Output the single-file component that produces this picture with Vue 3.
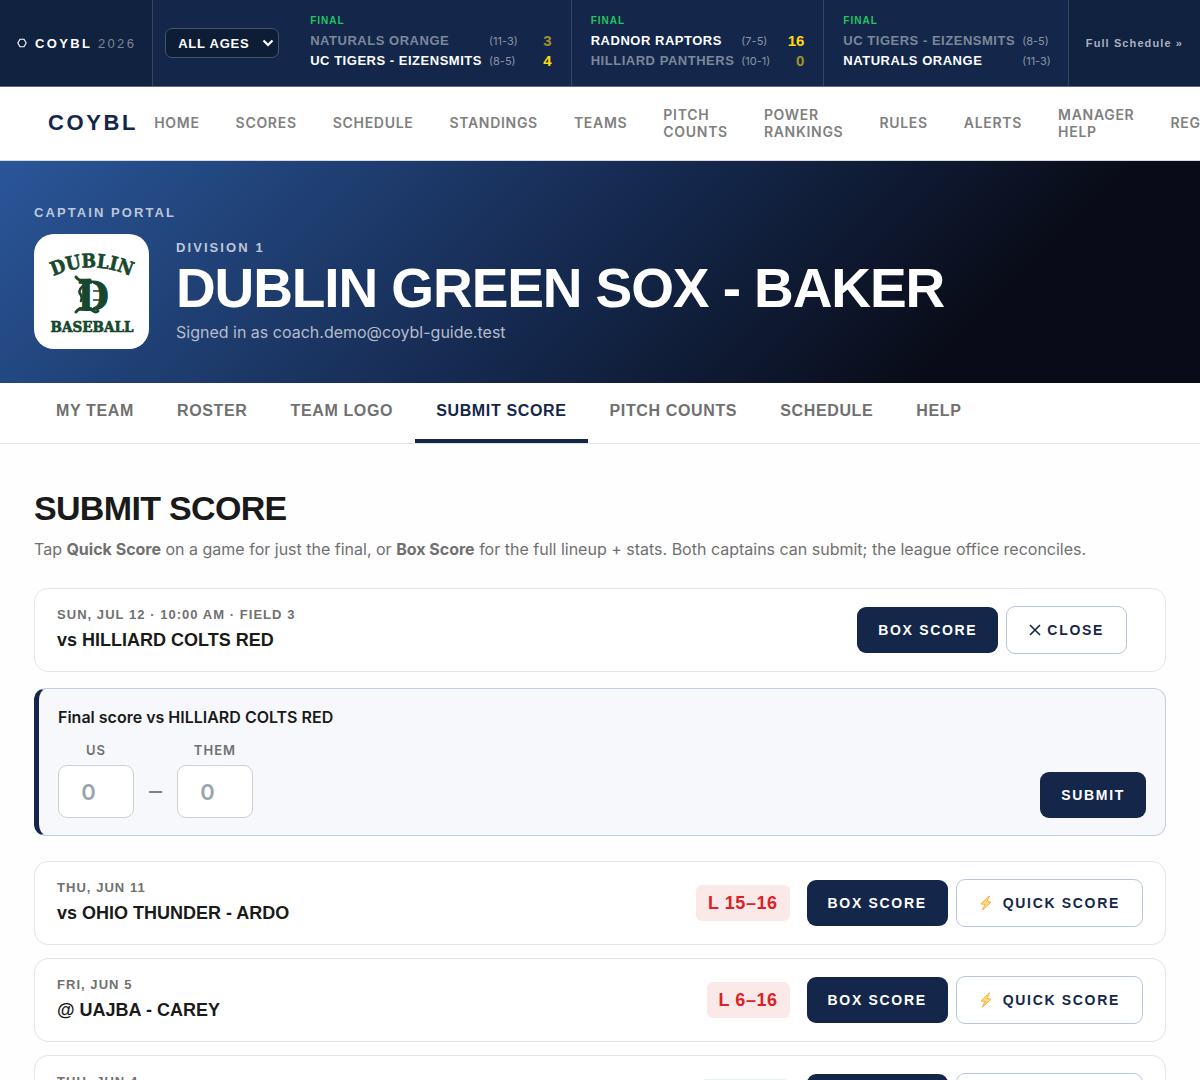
<template>
    <div class="page">
        <section class="ticker" aria-label="Scores">
            <div class="ticker-brand">
                <svg class="hex" viewBox="0 0 10 10" aria-hidden="true">
                    <path d="M3 1.2h4L9.2 5 7 8.8H3L.8 5z" fill="none" stroke="currentColor" stroke-width="1.1" />
                </svg>
                <span>COYBL <span class="year">2026</span></span>
            </div>
            <div class="ticker-filter">
                <select v-model="age" aria-label="Age group">
                    <option>ALL AGES</option>
                    <option>9U</option>
                    <option>10U</option>
                    <option>11U</option>
                    <option>12U</option>
                </select>
                <svg class="chevron" viewBox="0 0 12 8" aria-hidden="true">
                    <path d="M1.5 1.5 6 6l4.5-4.5" fill="none" stroke="currentColor" stroke-width="2.2" />
                </svg>
            </div>
            <div class="ticker-games">
                <div class="ticker-game" v-for="(game, index) in finals" :key="index">
                    <div class="status">FINAL</div>
                    <div class="lines">
                        <template v-for="side in game" :key="side.name">
                            <span class="name" :class="{ lost: !side.won }">{{ side.name }}</span>
                            <span class="record">({{ side.record }})</span>
                            <span class="runs" :class="{ lost: !side.won }">{{ side.runs }}</span>
                        </template>
                    </div>
                </div>
            </div>
            <a class="ticker-more" href="#">Full Schedule »</a>
        </section>

        <header class="site-nav">
            <a class="site-logo" href="#">COYBL</a>
            <nav>
                <a href="#" v-for="link in links" :key="link">{{ link }}</a>
            </nav>
        </header>

        <section class="hero">
            <div class="eyebrow">CAPTAIN PORTAL</div>
            <div class="team">
                <div class="team-logo">
                    <svg viewBox="0 0 84 84" role="img" aria-label="Dublin Baseball">
                        <defs>
                            <path id="arch" d="M-2 29Q42 6 86 29" />
                        </defs>
                        <g class="slab" fill="#17472d" stroke="#17472d" text-anchor="middle">
                            <text font-size="19" stroke-width=".6">
                                <textPath href="#arch" startOffset="50%">DUBLIN</textPath>
                            </text>
                            <text x="42" y="82" font-size="15" stroke-width=".6">BASEBALL</text>
                            <text x="43" y="60" font-size="40" stroke-width="1">D</text>
                        </g>
                        <!-- flourishes and split stem of the monogram -->
                        <g fill="none" stroke="#17472d" stroke-linecap="round">
                            <path d="M26 27c3 5 8 3 14 3" stroke-width="3" />
                            <path d="M33 36c-5 4-4 7-2 9 1 2 1 4 0 6" stroke-width="2.6" />
                            <path d="M26 62c4-6 9-1 14-3 3 1 5 5 8 2" stroke-width="3" />
                        </g>
                        <path d="M42.5 33v25" stroke="#fff" stroke-width="1.4" />
                        <path d="M43 41h8M43 50h8" stroke="#17472d" stroke-width="1.4" />
                    </svg>
                </div>
                <div>
                    <div class="eyebrow">DIVISION 1</div>
                    <h1>DUBLIN GREEN SOX - BAKER</h1>
                    <p>Signed in as coach.demo@coybl-guide.test</p>
                </div>
            </div>
        </section>

        <nav class="tabs">
            <a href="#" v-for="tab in tabs" :key="tab" :class="{ active: tab === activeTab }" @click.prevent="activeTab = tab">{{ tab }}</a>
        </nav>

        <main>
            <h2>SUBMIT SCORE</h2>
            <p class="intro">
                Tap <strong>Quick Score</strong> on a game for just the final, or <strong>Box Score</strong> for the full lineup + stats. Both captains can submit; the league office reconciles.
            </p>

            <template v-for="game in games" :key="game.id">
                <article class="game" :class="{ open: openId === game.id }">
                    <div class="game-info">
                        <div class="when">{{ game.when }}</div>
                        <div class="opponent">{{ game.opponent }}</div>
                    </div>
                    <span v-if="game.result" class="result" :class="{ win: game.result.startsWith('W') }">{{ game.result }}</span>
                    <div class="actions">
                        <button type="button" class="btn">BOX SCORE</button>
                        <button v-if="openId === game.id" type="button" class="btn outline" @click="openId = null">
                            <svg class="cross" viewBox="0 0 12 12" aria-hidden="true">
                                <path d="M1 1l10 10M11 1L1 11" stroke="currentColor" stroke-width="1.6" />
                            </svg>
                            CLOSE
                        </button>
                        <button v-else type="button" class="btn outline quick" @click="openId = game.id">
                            <svg class="bolt" viewBox="0 0 14 16" aria-hidden="true">
                                <path d="M10.5 1 2 8.8l4.2.6L3.4 15 12 7.2l-4.3-.6z" fill="#ffe08a" stroke="#f9ab2e" />
                            </svg>
                            QUICK SCORE
                        </button>
                    </div>
                </article>

                <form v-if="openId === game.id" class="score-form" @submit.prevent>
                    <h3>Final score {{ game.opponent }}</h3>
                    <div class="score-row">
                        <label>US<input type="number" min="0" placeholder="0" v-model="us" /></label>
                        <span class="dash">–</span>
                        <label>THEM<input type="number" min="0" placeholder="0" v-model="them" /></label>
                        <button type="submit" class="btn">SUBMIT</button>
                    </div>
                </form>
            </template>
        </main>
    </div>
</template>

<script setup>
import { ref } from 'vue'

const age = ref('ALL AGES')
const activeTab = ref('SUBMIT SCORE')
const openId = ref(1)
const us = ref('')
const them = ref('')

const finals = [
    [
        { name: 'NATURALS ORANGE', record: '11-3', runs: 3, won: false },
        { name: 'UC TIGERS - EIZENSMITS', record: '8-5', runs: 4, won: true }
    ],
    [
        { name: 'RADNOR RAPTORS', record: '7-5', runs: 16, won: true },
        { name: 'HILLIARD PANTHERS', record: '10-1', runs: 0, won: false }
    ],
    [
        { name: 'UC TIGERS - EIZENSMITS', record: '8-5', runs: 2, won: false },
        { name: 'NATURALS ORANGE', record: '11-3', runs: 7, won: true }
    ]
]

const links = ['HOME', 'SCORES', 'SCHEDULE', 'STANDINGS', 'TEAMS', 'PITCH COUNTS', 'POWER RANKINGS', 'RULES', 'ALERTS', 'MANAGER HELP', 'REGISTER']
const tabs = ['MY TEAM', 'ROSTER', 'TEAM LOGO', 'SUBMIT SCORE', 'PITCH COUNTS', 'SCHEDULE', 'HELP']

const games = [
    { id: 1, when: 'SUN, JUL 12 · 10:00 AM · FIELD 3', opponent: 'vs HILLIARD COLTS RED' },
    { id: 2, when: 'THU, JUN 11', opponent: 'vs OHIO THUNDER - ARDO', result: 'L 15–16' },
    { id: 3, when: 'FRI, JUN 5', opponent: '@ UAJBA - CAREY', result: 'L 6–16' },
    { id: 4, when: 'THU, JUN 4', opponent: 'vs OLENTANGY BLUE', result: 'W 12–9' }
]
</script>

<style>
body {
    margin: 0;
    background: #fefefe;
}
</style>

<style scoped>
.page {
    --navy: #14274b;
    --head: "Liberation Sans", Arial, sans-serif;
    --body: Inter, sans-serif;
    font-family: var(--body);
    color: #1a1a1a;
    overflow-x: hidden;
}

a {
    color: inherit;
    text-decoration: none;
}

h1, h2, h3, p {
    margin: 0;
}

/* score ticker */
.ticker {
    display: flex;
    height: 87px;
    background: var(--navy);
    border-bottom: 1px solid #5d6b85;
    box-sizing: border-box;
    color: #fff;
    font-family: var(--head);
    font-weight: 700;
}

.ticker-brand {
    display: flex;
    align-items: center;
    gap: 8px;
    padding: 0 16px 0 17px;
    background: #112140;
    border-right: 1px solid #35455f;
    font-size: 13px;
    letter-spacing: 0.18em;
    white-space: nowrap;
}

.hex {
    width: 10px;
    height: 10px;
}

.year {
    color: #7c8799;
    font-weight: 400;
}

.ticker-filter {
    display: flex;
    align-items: center;
    position: relative;
    padding: 0 12px;
}

.ticker-filter select {
    appearance: none;
    width: 114px;
    height: 30px;
    padding: 0 12px;
    background: #0e1d36;
    border: 1px solid #47536a;
    border-radius: 7px;
    color: #fff;
    font: 700 13px var(--head);
    letter-spacing: 0.06em;
}

.chevron {
    position: absolute;
    right: 17px;
    width: 12px;
    height: 8px;
    pointer-events: none;
}

.ticker-games {
    flex: 1;
    min-width: 0;
    display: flex;
    overflow: hidden;
}

.ticker-game {
    flex: none;
    padding: 11px 19px 0;
    border-right: 1px solid #35455f;
}

.status {
    color: #22c55e;
    font-size: 10px;
    line-height: 20px;
    letter-spacing: 0.1em;
}

.lines {
    display: grid;
    grid-template-columns: auto auto 27px;
    column-gap: 7px;
    font-size: 13px;
    line-height: 20px;
    letter-spacing: 0.04em;
    white-space: nowrap;
}

.name.lost {
    color: #7c8799;
}

.record {
    color: #8a94a6;
    font: 400 11px/20px var(--body);
    letter-spacing: 0;
}

.runs {
    color: #ffd90f;
    font-size: 15px;
    letter-spacing: 0;
    text-align: right;
}

.runs.lost {
    opacity: 0.6;
}

.ticker-more {
    display: flex;
    align-items: center;
    padding: 0 17px;
    background: #112140;
    border-left: 1px solid #35455f;
    color: #a9b1be;
    font-size: 11px;
    letter-spacing: 0.1em;
    white-space: nowrap;
}

/* site navigation */
.site-nav {
    display: flex;
    align-items: center;
    gap: 16px;
    height: 74px;
    padding: 0 0 2px 48px;
    box-sizing: border-box;
    background: #fff;
    border-bottom: 1px solid #d8dade;
    overflow: hidden;
}

.site-logo {
    color: var(--navy);
    font: 700 22px var(--head);
    letter-spacing: 0.12em;
}

.site-nav nav {
    display: flex;
    align-items: center;
    gap: 36px;
    color: #808080;
    font-size: 14px;
    font-weight: 600;
    line-height: 17px;
    letter-spacing: 0.05em;
}

.site-nav nav a {
    width: min-content;
}

/* hero */
.hero {
    padding: 42px 34px 34px;
    background: linear-gradient(135deg, #2a5699 0%, #14274b 50%, #090c18 80%);
    color: #fff;
}

.eyebrow {
    color: #bcc7da;
    font: 700 13px/20px var(--head);
    letter-spacing: 0.16em;
}

.team {
    display: flex;
    align-items: center;
    gap: 27px;
    margin-top: 11px;
}

.team-logo {
    flex: none;
    display: grid;
    place-items: center;
    width: 115px;
    height: 115px;
    background: #fff;
    border-radius: 20px;
}

.team-logo svg {
    width: 84px;
    height: 84px;
    overflow: visible;
}

.slab {
    font-family: "DejaVu Serif Condensed", "DejaVu Serif", serif;
    font-weight: 700;
}

.hero h1 {
    font: 700 55px/60px var(--head);
    letter-spacing: -0.02em;
}

.hero p {
    color: #b4bccb;
    font-size: 16px;
    line-height: 28px;
}

/* portal tabs */
.tabs {
    display: flex;
    gap: 1px;
    padding: 0 35px;
    background: #fff;
    border-bottom: 1px solid #e3e3e5;
    color: #707070;
    font: 700 16px/56px var(--head);
    letter-spacing: 0.04em;
    white-space: nowrap;
}

.tabs a {
    padding: 0 21px;
    border-bottom: 4px solid transparent;
}

.tabs .active {
    color: var(--navy);
    border-bottom-color: var(--navy);
}

/* content */
main {
    padding: 44px 34px;
}

h2 {
    font: 700 34px/40px var(--head);
    letter-spacing: -0.02em;
}

.intro {
    margin: 8px 0 26px;
    color: #707070;
    font-size: 16px;
    font-optical-sizing: none;
    line-height: 26px;
}

.game {
    display: flex;
    align-items: center;
    gap: 17px;
    margin-bottom: 13px;
    padding: 17px 22px;
    background: #fff;
    border: 1px solid #e5e5e7;
    border-radius: 14px;
}

.game.open {
    margin-bottom: 16px;
    padding-right: 38px;
}

.game-info {
    flex: 1;
}

.when {
    color: #707070;
    font: 700 13px/18px var(--head);
    letter-spacing: 0.08em;
}

.opponent {
    margin-top: 2px;
    font: 700 18px/28px var(--head);
}

.result {
    padding: 0 12px;
    background: #fbe9e9;
    border-radius: 6px;
    color: #dc2222;
    font: 700 18px/36px var(--head);
    letter-spacing: 0.03em;
}

.result.win {
    background: #e6f5ef;
    color: #15803d;
}

.actions {
    display: flex;
    align-items: center;
    gap: 8px;
}

.btn {
    display: flex;
    align-items: center;
    gap: 6px;
    height: 46px;
    padding: 0 21px;
    background: var(--navy);
    border: 0;
    border-radius: 9px;
    color: #fff;
    font: 700 14px var(--head);
    letter-spacing: 0.12em;
}

.btn.outline {
    height: 48px;
    padding: 0 22px;
    background: #fff;
    border: 1px solid #b9c5dc;
    color: var(--navy);
}

.btn.quick {
    gap: 10px;
}

.cross {
    width: 12px;
    height: 12px;
}

.bolt {
    width: 14px;
    height: 16px;
}

.score-form {
    margin-bottom: 25px;
    padding: 16px 19px 17px;
    background: #f6f8fc;
    border: 1px solid #c3cfe3;
    border-left: 5px solid var(--navy);
    border-radius: 12px;
}

.score-form h3 {
    font-size: 16px;
    font-weight: 600;
    line-height: 24px;
}

.score-row {
    display: flex;
    align-items: flex-end;
    gap: 15px;
    margin-top: 10px;
}

.score-row label {
    display: flex;
    flex-direction: column;
    align-items: center;
    gap: 4px;
    color: #707070;
    font-size: 13px;
    font-weight: 600;
    line-height: 22px;
    letter-spacing: 0.08em;
}

.score-row input {
    width: 76px;
    height: 53px;
    padding: 0 12px;
    box-sizing: border-box;
    background: #fff;
    border: 1px solid #cfcfd2;
    border-radius: 9px;
    color: #1a1a1a;
    font: 600 22px var(--body);
    text-align: center;
}

.score-row input::placeholder {
    color: #9ca3af;
}

.dash {
    color: #808080;
    font-size: 26px;
    line-height: 54px;
}

.score-row .btn {
    margin-left: auto;
}
</style>
